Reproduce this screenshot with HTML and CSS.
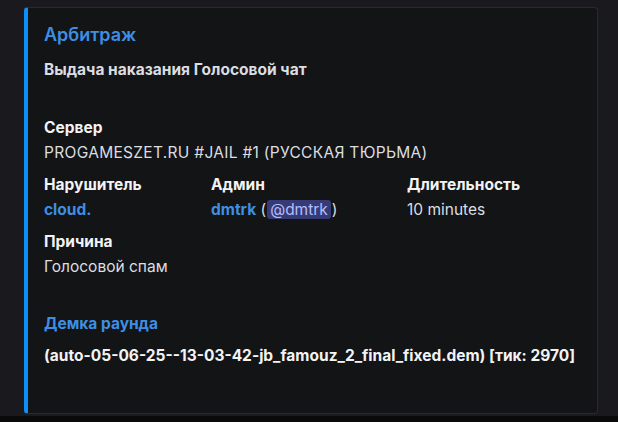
FILE: index.html
```html
<!DOCTYPE html>
<html>
  <head>
    <meta charset="UTF-8" />
    <link rel="stylesheet" href="styles.css">
  </head>
  <body>
    <div class="page">
      <div class="embed">
        <div class="embed-title">Арбитраж</div>
        <div class="embed-desc">Выдача наказания Голосовой чат</div>

        <div class="embed-fields">
          <div class="field full">
            <div class="field-name">Сервер</div>
            <div class="field-value caps">PROGAMESZET.RU #JAIL #1 (РУССКАЯ ТЮРЬМА)</div>
          </div>
          <div class="field">
            <div class="field-name">Нарушитель</div>
            <div class="field-value"><span class="link">cloud.</span></div>
          </div>
          <div class="field">
            <div class="field-name">Админ</div>
            <div class="field-value"><span class="link">dmtrk</span> (<span class="mention">@dmtrk</span>)</div>
          </div>
          <div class="field">
            <div class="field-name">Длительность</div>
            <div class="field-value">10 minutes</div>
          </div>
          <div class="field full">
            <div class="field-name">Причина</div>
            <div class="field-value">Голосовой спам</div>
          </div>
          <div class="field full">
            <div class="field-name">&nbsp;</div>
            <div class="field-value"><span class="link">Демка раунда</span></div>
          </div>
          <div class="field full">
            <div class="field-name">(auto-05-06-25--13-03-42-jb_famouz_2_final_fixed.dem) [тик: 2970]</div>
            <div class="field-value">&nbsp;</div>
          </div>
        </div>
      </div>
    </div>
  </body>
</html>
```

FILE: styles.css
```css
:root {
  --bg: #1a1a1e;
  --embed-bg: #131416;
  --embed-border: #2a2b30;
  --accent: #0c8ffb;
  --link: #3e8fe3;
  --text: #dbdee1;
  --header: #f2f3f5;
}

* {
  margin: 0;
  padding: 0;
  box-sizing: border-box;
}

html {
  background-color: #0a0a0b;
}

body {
  font-family: Inter, 'Noto Sans', Arial, sans-serif;
  font-size: 15.5px;
  line-height: 22px;
  color: var(--text);
}

.page {
  height: 416px;
  background-color: var(--bg);
  padding: 7px 20px 0 24px;
}

.embed {
  background-color: var(--embed-bg);
  border: 1px solid var(--embed-border);
  border-left: 4px solid var(--accent);
  border-radius: 4px;
  padding: 15px 20px 21px 16px;
}

.embed-title {
  font-size: 18px;
  line-height: 24px;
  font-weight: 600;
  color: var(--link);
}

.embed-desc {
  margin-top: 12px;
  font-weight: 700;
}

.embed-fields {
  margin-top: 36px;
  display: grid;
  grid-template-columns: 157px 186px 1fr;
  column-gap: 10px;
  row-gap: 10.5px;
}

.field.full {
  grid-column: 1 / 4;
}

.field-name {
  font-weight: 700;
  color: var(--header);
  margin-bottom: 2.5px;
  white-space: nowrap;
}

/* uppercase runs a bit wider in the original font */
.field-value.caps {
  letter-spacing: 0.3px;
}

.link {
  color: var(--link);
  font-weight: 700;
}

.mention {
  background-color: #363b75;
  color: #b4bdff;
  border-radius: 3px;
  padding: 0 3px;
  margin: 0 1px;
}
```
